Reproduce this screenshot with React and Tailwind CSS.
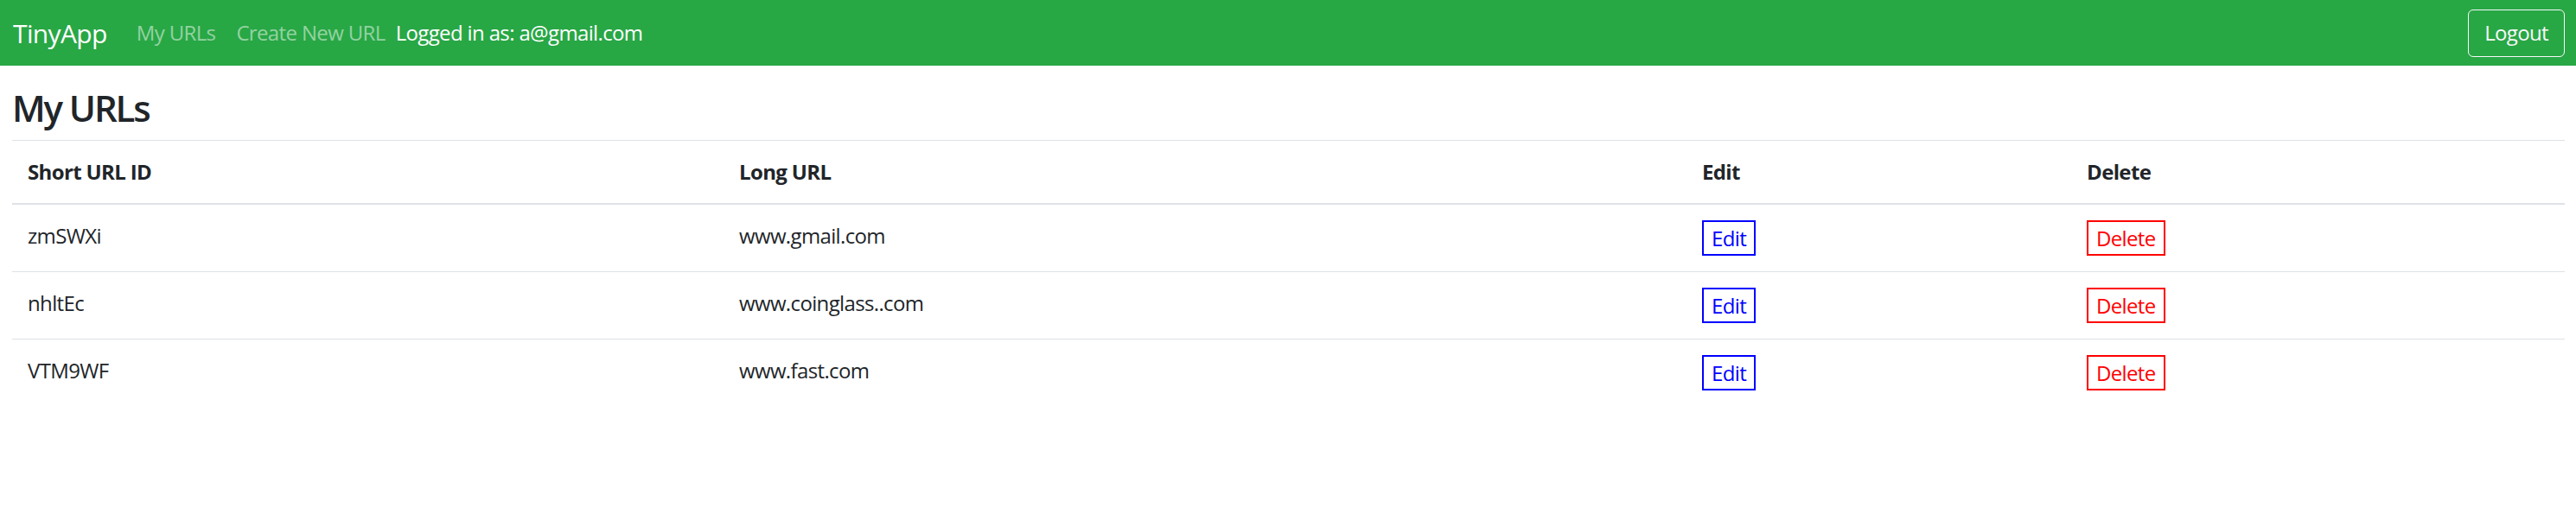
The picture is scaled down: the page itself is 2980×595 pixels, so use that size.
import React from "react";

const rows = [
  { id: "zmSWXi", url: "www.gmail.com" },
  { id: "nhltEc", url: "www.coinglass..com" },
  { id: "VTM9WF", url: "www.fast.com" },
];

export default function App() {
  return (
    <div className="min-h-[595px] bg-white text-[#212529] font-['Open_Sans',sans-serif] tracking-[-0.04em]">
      <nav className="flex h-[76px] items-center justify-between bg-[#28a745] pl-[15px] pr-[13px]">
        <div className="flex items-center">
          <a className="mr-[22px] text-[30px] leading-[45px] text-white">TinyApp</a>
          <a className="px-[12px] text-[24px] leading-[36px] text-white/50">My URLs</a>
          <a className="px-[12px] text-[24px] leading-[36px] text-white/50">Create New URL</a>
          <span className="text-[24px] leading-[36px] text-white">Logged in as: a@gmail.com</span>
        </div>
        <button className="h-[55px] rounded-[6px] border border-[#f8f9fa] px-[18px] text-[24px] leading-[36px] text-[#f8f9fa]">
          Logout
        </button>
      </nav>
      <main className="pl-[14px] pr-[13px] pt-[24px]">
        <h3 className="mb-[12px] text-[42px] font-semibold leading-[50px] tracking-[-0.05em]">My URLs</h3>
        <table className="w-full table-fixed border-collapse text-[24px] leading-[36px]">
          <colgroup>
            <col className="w-[823px]" />
            <col className="w-[1114px]" />
            <col className="w-[445px]" />
            <col />
          </colgroup>
          <thead>
            <tr className="border-t border-[#dee2e6]">
              <th className="border-b-2 border-[#dee2e6] p-[18px] text-left font-bold">Short URL ID</th>
              <th className="border-b-2 border-[#dee2e6] p-[18px] text-left font-bold">Long URL</th>
              <th className="border-b-2 border-[#dee2e6] p-[18px] text-left font-bold">Edit</th>
              <th className="border-b-2 border-[#dee2e6] p-[18px] text-left font-bold">Delete</th>
            </tr>
          </thead>
          <tbody>
            {rows.map((r, i) => (
              <tr key={r.id} className={i > 0 ? "border-t border-[#dee2e6]" : ""}>
                <td className="p-[18px] align-top">{r.id}</td>
                <td className="p-[18px] align-top">{r.url}</td>
                <td className="p-[18px] align-top">
                  <button className="h-[41px] border-2 border-[#0000ff] px-[9px] text-[24px] leading-[34px] text-[#0000ff]">
                    Edit
                  </button>
                </td>
                <td className="p-[18px] align-top">
                  <button className="h-[41px] border-2 border-[#ff0000] px-[9px] text-[24px] leading-[34px] text-[#ff0000]">
                    Delete
                  </button>
                </td>
              </tr>
            ))}
          </tbody>
        </table>
      </main>
    </div>
  );
}
